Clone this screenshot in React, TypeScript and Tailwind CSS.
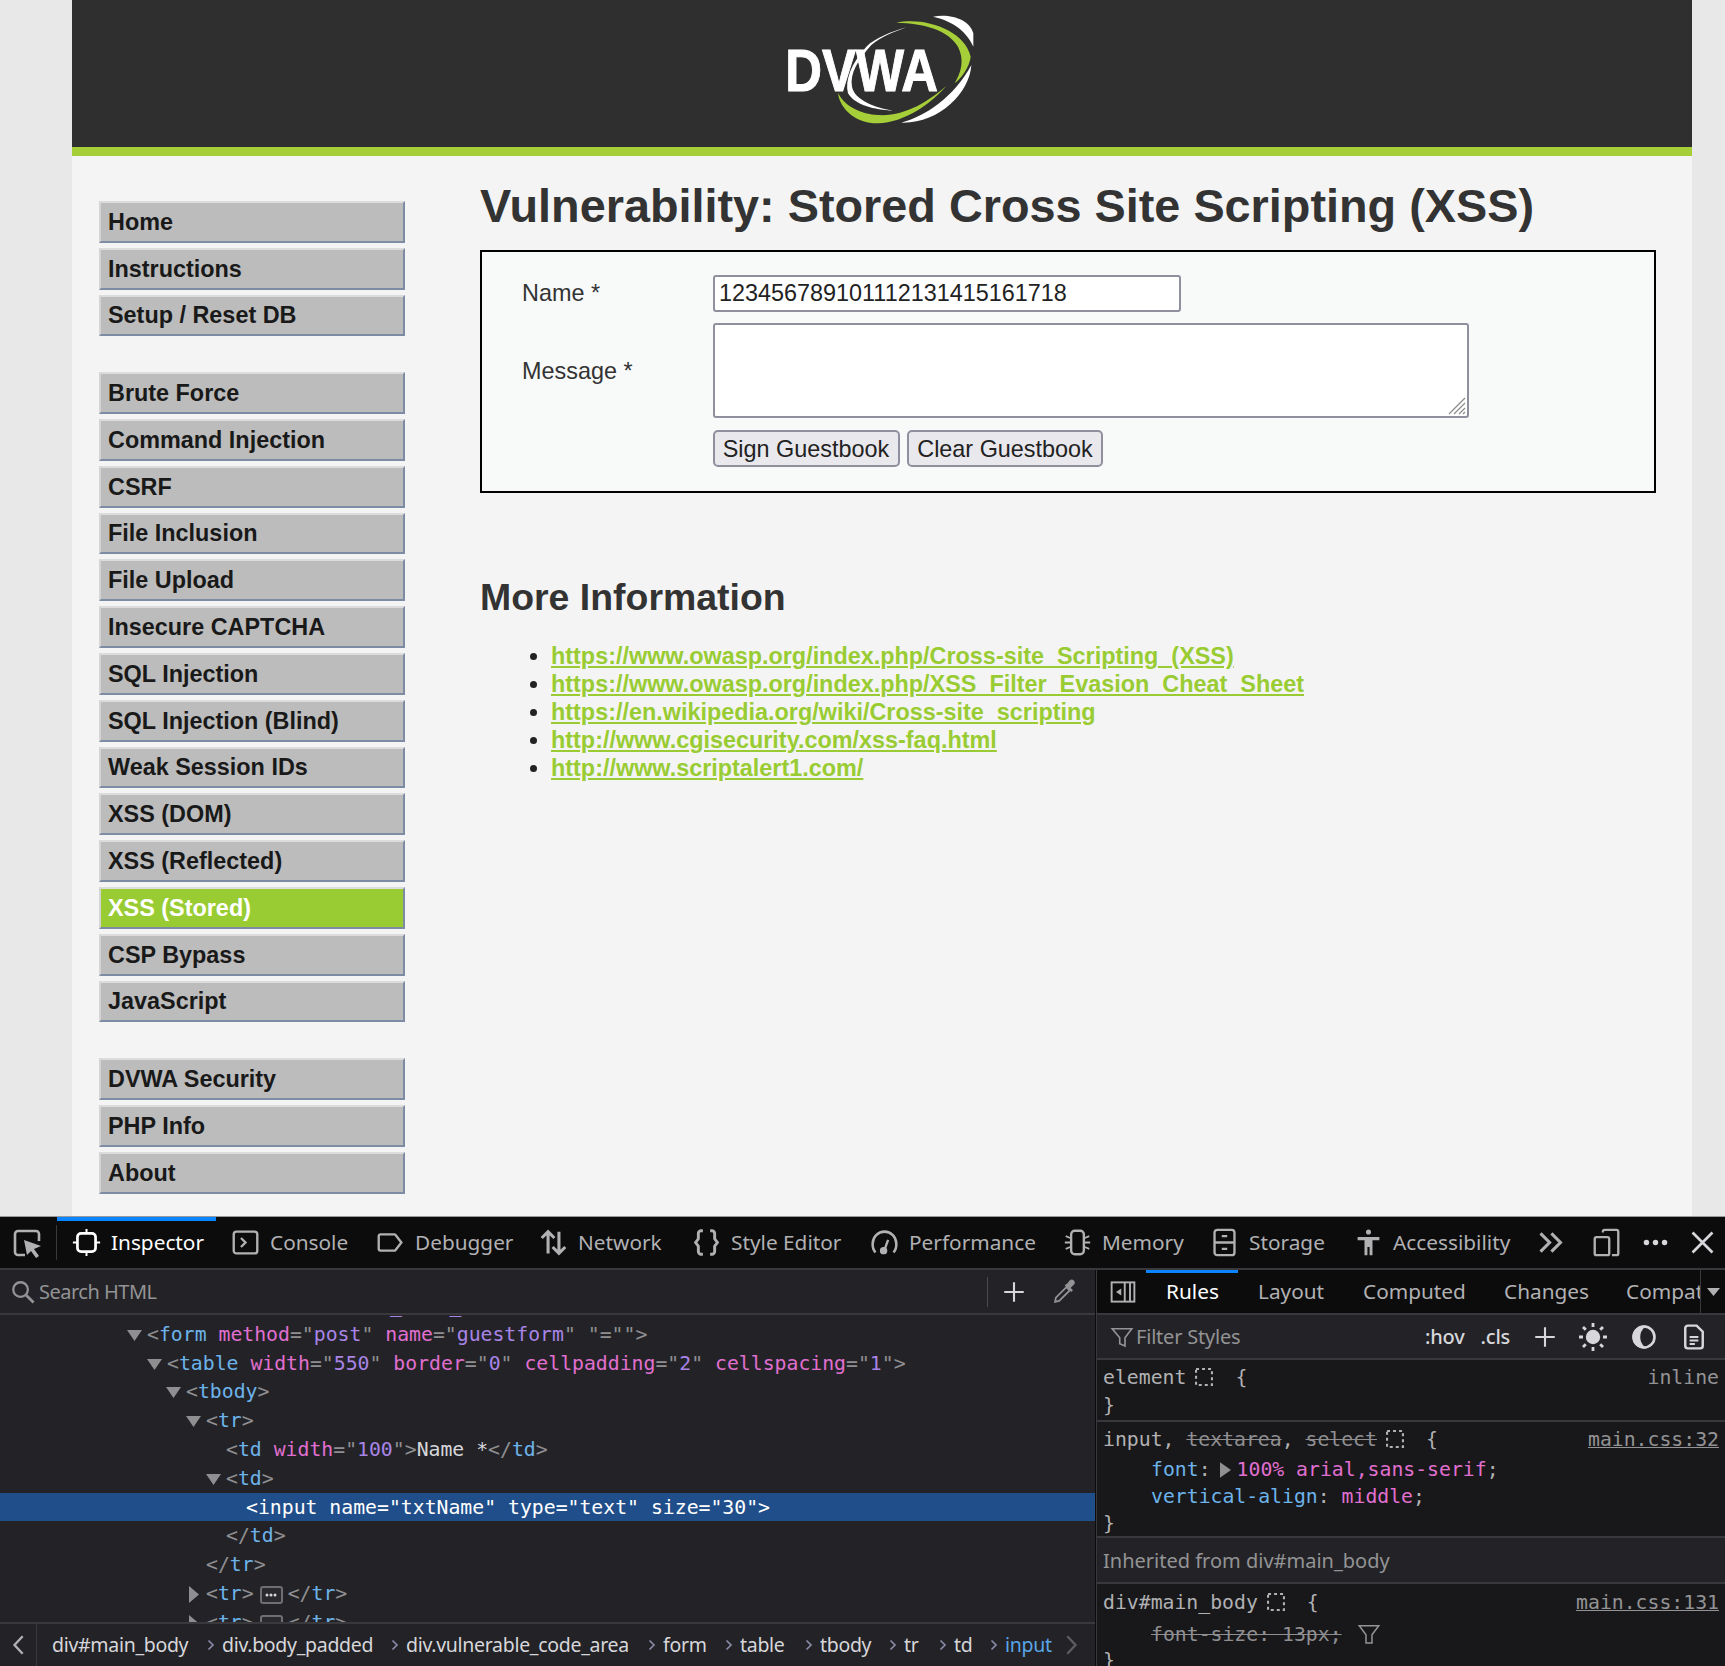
import type { ReactNode } from 'react';

const navGroups = [
  ['Home', 'Instructions', 'Setup / Reset DB'],
  [
    'Brute Force',
    'Command Injection',
    'CSRF',
    'File Inclusion',
    'File Upload',
    'Insecure CAPTCHA',
    'SQL Injection',
    'SQL Injection (Blind)',
    'Weak Session IDs',
    'XSS (DOM)',
    'XSS (Reflected)',
    'XSS (Stored)',
    'CSP Bypass',
    'JavaScript',
  ],
  ['DVWA Security', 'PHP Info', 'About'],
];

const links = [
  'https://www.owasp.org/index.php/Cross-site_Scripting_(XSS)',
  'https://www.owasp.org/index.php/XSS_Filter_Evasion_Cheat_Sheet',
  'https://en.wikipedia.org/wiki/Cross-site_scripting',
  'http://www.cgisecurity.com/xss-faq.html',
  'http://www.scriptalert1.com/',
];

function Logo() {
  return (
    <svg viewBox="0 0 960 480" className="w-[320px] h-[160px] shrink-0">
      <text x="262" y="272" textLength="458" lengthAdjust="spacingAndGlyphs" fontFamily="Liberation Sans" fontWeight="700" fontSize="176" fill="#fff" stroke="#fff" strokeWidth="3">DVWA</text>
      <path d="M595 68C680 50 800 90 818 170C815 200 790 235 770 250C790 215 800 180 780 140C750 90 680 70 595 68Z" fill="#a6ce39" />
      <path d="M420 278C425 330 480 372 540 370C620 368 700 310 745 258C690 305 620 350 540 345C490 342 440 320 420 278Z" fill="#a6ce39" />
      <path d="M705 50C760 40 815 60 826 100L826 140C805 95 770 65 705 50Z" fill="#fff" />
      <path d="M820 195C815 280 720 372 610 368C680 350 770 290 820 195Z" fill="#fff" />
      <path d="M625 82C580 95 530 115 505 140C460 190 440 240 450 280C470 315 530 330 585 332C530 322 470 300 462 260C455 220 480 180 520 135C550 110 590 95 625 82Z" fill="#fff" />
    </svg>
  );
}

function Ico({ children, size = 29, className = '' }: { children: ReactNode; size?: number; className?: string }) {
  return (
    <svg viewBox="0 0 16 16" width={size} height={size} fill="none" stroke="currentColor" strokeWidth="1.1" className={`shrink-0 ${className}`}>
      {children}
    </svg>
  );
}

const toolIcons: Record<string, ReactNode> = {
  Inspector: (
    <>
      <rect x="3" y="3" width="10" height="10" rx="2" strokeWidth="1.5" />
      <path d="M8 0.5V3M8 13v2.5M0.5 8H3M13 8h2.5" />
    </>
  ),
  Console: (
    <>
      <rect x="1.5" y="2" width="13" height="12" rx="1.5" strokeWidth="1.3" />
      <path d="M5.5 5.5 8 8l-2.500 2.500" strokeWidth="1.3" />
    </>
  ),
  Debugger: <path d="M2.500 3.500h7.500a1 1 0 0 1 .8.4L14 8l-3.200 4.100a1 1 0 0 1-.8.4H2.500a1 1 0 0 1-1-1v-7a1 1 0 0 1 1-1Z" strokeWidth="1.3" />,
  Network: <path d="M5 14V2M1.500 5.500 5 2l3.500 3.500M11 2v12M7.500 10.500 11 14l3.500-3.500" strokeWidth="1.7" />,
  'Style Editor': <path d="M6 1.500H5a1.500 1.500 0 0 0-1.500 1.500v3L2 8l1.500 2v3A1.500 1.500 0 0 0 5 14.500h1M10 1.500h1A1.500 1.500 0 0 1 12.500 3v3L14 8l-1.500 2v3a1.500 1.500 0 0 1-1.500 1.500h-1" strokeWidth="1.6" />,
  Performance: (
    <>
      <path d="M3 13.500A7 7 0 0 1 1.500 8.500a6.500 6.500 0 0 1 13 0 7 7 0 0 1-1.500 5" strokeWidth="1.4" />
      <path d="M8 12 10 6.500" strokeWidth="1.300" />
      <circle cx="7.500" cy="12.500" r="1.500" fill="currentColor" />
    </>
  ),
  Memory: (
    <>
      <rect x="4.500" y="1.500" width="7" height="13" rx="2" strokeWidth="1.300" />
      <path d="M1.500 4.500 4 5.500M1 8h3M1.500 11.500 4 10.500M14.500 4.500 12 5.500M15 8h-3M14.500 11.500 12 10.500" strokeWidth="1" />
    </>
  ),
  Storage: (
    <>
      <rect x="2.500" y="1" width="11" height="14" rx="1.500" strokeWidth="1.300" />
      <path d="M2.500 8h11M6.500 4.500h3M6.500 11.500h3" strokeWidth="1.300" />
    </>
  ),
  Accessibility: (
    <>
      <circle cx="8" cy="2.200" r="1.400" fill="currentColor" stroke="none" />
      <path d="M2 5h12v1.700H10.200V15H8.600V10.500H7.400V15H5.800V6.700H2Z" fill="currentColor" stroke="none" />
    </>
  ),
};

const tools = [
  { name: 'Inspector', w: 'w-[159px]' },
  { name: 'Console', w: 'w-[145px]' },
  { name: 'Debugger', w: 'w-[163px]' },
  { name: 'Network', w: 'w-[153px]' },
  { name: 'Style Editor', w: 'w-[178px]' },
  { name: 'Performance', w: 'w-[193px]' },
  { name: 'Memory', w: 'w-[147px]' },
  { name: 'Storage', w: 'w-[144px]' },
  { name: 'Accessibility', w: 'w-[172px]' },
];

// markup colours of the inspector
function Tag({ children }: { children: ReactNode }) {
  return <span className="text-[#6db3ea]">{children}</span>;
}
function Attr({ n, v }: { n: string; v: string }) {
  return (
    <>
      {' '}
      <span className="text-[#e06fd0]">{n}</span>=&quot;<span className="text-[#a884e6]">{v}</span>&quot;
    </>
  );
}
function Open({ open = true }: { open?: boolean }) {
  return open ? (
    <svg viewBox="0 0 10 10" className="absolute -left-[20px] top-[9px] w-[15px] h-[11px] text-[#8f8f92]" preserveAspectRatio="none">
      <path d="M0 0h10L5 10Z" fill="currentColor" />
    </svg>
  ) : (
    <svg viewBox="0 0 10 10" className="absolute -left-[17px] top-[6px] w-[10px] h-[17px] text-[#8f8f92]" preserveAspectRatio="none">
      <path d="M0 0l10 5L0 10Z" fill="currentColor" />
    </svg>
  );
}
function Badge() {
  return (
    <span className="inline-flex items-center justify-center w-[23px] h-[18px] ml-[6px] mr-[5px] rounded-[3px] border-2 border-[#6f6f73] bg-[#2a2a2e] align-[3px] text-[#d7d7db]">
      <svg viewBox="0 0 12 4" className="w-[12px] h-[4px]">
        <circle cx="2" cy="2" r="1.500" fill="currentColor" />
        <circle cx="6" cy="2" r="1.500" fill="currentColor" />
        <circle cx="10" cy="2" r="1.500" fill="currentColor" />
      </svg>
    </span>
  );
}

function SelIcon() {
  return (
    <svg viewBox="0 0 12 12" className="inline-block w-[18px] h-[18px] ml-[9px] mr-[22px] align-[-2px] text-[#b1b1b3]">
      <path d="M0.700 0.700h10.600v10.600H0.700Z" stroke="currentColor" strokeWidth="1.400" strokeDasharray="2 2" fill="none" />
    </svg>
  );
}

function Row({ indent, active, children, open }: { indent: string; active?: boolean; children: ReactNode; open?: boolean }) {
  return (
    <div className={`h-[28.8px] leading-[28.8px] whitespace-nowrap ${active ? 'bg-[#204e8a] text-white' : ''}`}>
      <div className={`relative top-[1px] ${indent}`}>
        {open !== undefined && <Open open={open} />}
        {children}
      </div>
    </div>
  );
}

function Crumb({ w, children, last }: { w: string; children: ReactNode; last?: boolean }) {
  return (
    <div className={`${w} shrink-0 flex items-center justify-between pr-[7px]`}>
      <span className="whitespace-nowrap">{children}</span>
      {!last && (
        <svg viewBox="0 0 8 12" className="w-[8px] h-[12px] text-[#8a8aa8] shrink-0">
          <path d="M1.500 1.500 6 6l-4.500 4.500" stroke="currentColor" strokeWidth="1.700" fill="none" />
        </svg>
      )}
    </div>
  );
}

function RuleRow({ children, className = '' }: { children: ReactNode; className?: string }) {
  return <div className={`h-[28px] leading-[28px] whitespace-nowrap flex justify-between pl-[6px] pr-[6px] ${className}`}>{children}</div>;
}

export default function App() {
  return (
    <div className="h-[1666px] w-[1725px] overflow-hidden flex flex-col bg-[#e8e8e8]">
      {/* the page */}
      <div className="h-[1216px] shrink-0 overflow-hidden pl-[72px] pr-[33px]">
        <div className="w-[1620px] h-full bg-[#f4f4f4] font-['Liberation_Sans',Arial,sans-serif] text-[23.4px] text-[#333]">
          <div className="h-[156px] bg-[#2f2f2f] border-b-[9px] border-b-[#a6ce39] flex justify-center">
            <div className="ml-[-49px]">
              <Logo />
            </div>
          </div>
          <div className="flex">
            <div className="w-[306px] ml-[27px] mt-[45px] shrink-0 flex flex-col gap-[35.8px]">
              {navGroups.map((group, i) => (
                <div key={i} className="flex flex-col gap-[5px]">
                  {group.map((item) => (
                    <div
                      key={item}
                      className={`h-[41.8px] pl-[7px] pt-[1px] flex items-center font-bold border-2 border-t-[#dcdcdc] border-l-[#d4d4d4] border-r-[#7d8ba3] border-b-[#7d8ba3] ${
                        item === 'XSS (Stored)' ? 'bg-[#99cc33] text-white' : 'bg-[#bcbcbc] text-[#191919]'
                      }`}
                    >
                      {item}
                    </div>
                  ))}
                </div>
              ))}
            </div>
            <div className="ml-[75px] w-[1176px]">
              <h1 className="mt-[20px] h-[60px] leading-[60px] text-[46.8px] font-bold whitespace-nowrap">Vulnerability: Stored Cross Site Scripting (XSS)</h1>
              <div className="mt-[14px] w-[1176px] h-[243px] border-2 border-black bg-[#f8f9f9] pt-[23px] pl-[40px]">
                <div className="flex items-center h-[37px]">
                  <div className="w-[191px] pt-[1px]">Name *</div>
                  <input
                    readOnly
                    defaultValue="123456789101112131415161718"
                    className="w-[468px] h-[37px] px-[4px] border-2 border-[#8f8f9d] rounded-[3px] bg-white text-[#222] outline-none"
                  />
                </div>
                <div className="flex items-center mt-[11px] h-[95px]">
                  <div className="w-[191px] pt-[2px]">Message *</div>
                  <div className="relative w-[756px] h-[95px]">
                    <textarea readOnly className="block w-full h-full resize-none border-2 border-[#8f8f9d] rounded-[3px] bg-white outline-none" />
                    <svg viewBox="0 0 18 18" className="absolute right-[3px] bottom-[3px] w-[18px] h-[18px] text-[#8a8a8a]">
                      <path d="M1 17 17 1M6 17 17 6M11 17l6-6M15 17l2-2" stroke="currentColor" strokeWidth="1.200" fill="none" />
                    </svg>
                  </div>
                </div>
                <div className="flex gap-[7px] mt-[12px] ml-[191px]">
                  <button className="w-[187px] h-[37px] pr-[1px] border-2 border-[#8f8f9d] rounded-[5px] bg-[#e9e9ed] text-[#222]">Sign Guestbook</button>
                  <button className="w-[196px] h-[37px] border-2 border-[#8f8f9d] rounded-[5px] bg-[#e9e9ed] text-[#222]">Clear Guestbook</button>
                </div>
              </div>
              <h2 className="mt-[82px] h-[44px] leading-[44px] text-[37.44px] font-bold">More Information</h2>
              <ul className="mt-[23px] pl-[71px] list-disc leading-[28px] marker:text-[#222]">
                {links.map((l) => (
                  <li key={l}>
                    <a className="font-bold underline text-[#99cc33]">{l}</a>
                  </li>
                ))}
              </ul>
            </div>
          </div>
        </div>
      </div>

      {/* devtools */}
      <div className="h-[450px] shrink-0 flex flex-col border-t border-t-[#9a9a9a] bg-[#232327] text-[#b1b1b3] font-['Noto_Sans','Open_Sans',sans-serif] text-[20px]">
        <div className="h-[51px] shrink-0 bg-[#0c0c0d] flex items-center text-[20.8px]">
          <div className="w-[53px] mr-[4px] h-full flex items-center justify-center shrink-0">
            <Ico size={32}>
              <path d="M7 14H3.500A1.500 1.500 0 0 1 2 12.500v-9A1.500 1.500 0 0 1 3.500 2h9A1.500 1.500 0 0 1 14 3.500V7" strokeWidth="1.300" />
              <path d="M6.500 6.500 15 9.500l-3.500 1.500 2.500 3.500-1.500 1-2.500-3.500-2 2Z" fill="currentColor" stroke="none" />
            </Ico>
          </div>
          <div className="w-px h-[35px] bg-[#38383d] -ml-px" />
          {tools.map((t) => (
            <div
              key={t.name}
              className={`${t.w} h-full shrink-0 flex items-center gap-[10px] pl-[15px] whitespace-nowrap ${
                t.name === 'Inspector' ? 'border-t-[4px] border-t-[#0a84ff] pb-[4px] text-white' : ''
              }`}
            >
              <Ico>{toolIcons[t.name]}</Ico>
              <span>{t.name}</span>
            </div>
          ))}
          <svg viewBox="0 0 16 16" className="w-[29px] h-[29px] ml-[25px] shrink-0" fill="none" stroke="currentColor" strokeWidth="1.700">
            <path d="M2.500 3 7.500 8l-5 5M8.500 3l5 5-5 5" />
          </svg>
          <Ico className="ml-[27px]">
            <path d="M6 2.500V2a1 1 0 0 1 1-1h6.500a1 1 0 0 1 1 1v12a1 1 0 0 1-1 1H11" strokeWidth="1.300" />
            <rect x="1.500" y="5" width="8" height="10" rx="1" strokeWidth="1.300" />
          </Ico>
          <svg viewBox="0 0 16 16" className="w-[29px] h-[29px] ml-[20px] shrink-0 text-[#d7d7db]" fill="currentColor">
            <circle cx="3" cy="8" r="1.500" />
            <circle cx="8" cy="8" r="1.500" />
            <circle cx="13" cy="8" r="1.500" />
          </svg>
          <Ico className="ml-[18px] text-[#d7d7db]">
            <path d="M2.500 2.500l11 11M13.500 2.500l-11 11" strokeWidth="1.500" />
          </Ico>
        </div>

        <div className="flex-1 min-h-0 flex border-t-2 border-t-[#38383d]">
          {/* markup */}
          <div className="w-[1096px] shrink-0 flex flex-col min-h-0 border-r border-r-[#0c0c0d]">
            <div className="h-[45px] shrink-0 flex items-center border-b-2 border-b-[#38383d] text-[#939395]">
              <Ico size={26} className="ml-[10px]">
                <circle cx="6.500" cy="6.500" r="4.500" strokeWidth="1.400" />
                <path d="M10 10l4.500 4.500" strokeWidth="1.700" />
              </Ico>
              <span className="ml-[3px] w-[948px] tracking-[-0.5px]">Search HTML</span>
              <div className="w-px h-[30px] bg-[#4a4a4f]" />
              <Ico size={26} className="ml-[13px] text-[#d7d7db]">
                <path d="M8 2v12M2 8h12" strokeWidth="1.300" />
              </Ico>
              <Ico size={26} className="ml-[24px]">
                <path d="M9.500 5 3 11.500 2.500 14l2.500-.5L11.500 7Z" />
                <path d="M9 3.500 13 7.500M11 5.500l2.500-2.500a1 1 0 0 0-1.500-1.500L10 4" fill="currentColor" strokeWidth="1.500" />
              </Ico>
            </div>
            <div className="h-[307px] shrink-0 overflow-hidden font-['DejaVu_Sans_Mono',monospace] text-[19.8px] text-[#8f8f92]">
              <div className="-mt-[24px]">
                <Row indent="pl-[128px]">
                  &lt;<Tag>div</Tag>
                  <Attr n="class" v="vulnerable_code_area" />
                  &gt;
                </Row>
                <Row indent="ml-[147px]" open>
                  &lt;<Tag>form</Tag>
                  <Attr n="method" v="post" />
                  <Attr n="name" v="guestform" />
                  {' "="">'}
                </Row>
                <Row indent="ml-[167px]" open>
                  &lt;<Tag>table</Tag>
                  <Attr n="width" v="550" />
                  <Attr n="border" v="0" />
                  <Attr n="cellpadding" v="2" />
                  <Attr n="cellspacing" v="1" />
                  &gt;
                </Row>
                <Row indent="ml-[186px]" open>
                  &lt;<Tag>tbody</Tag>&gt;
                </Row>
                <Row indent="ml-[206px]" open>
                  &lt;<Tag>tr</Tag>&gt;
                </Row>
                <Row indent="ml-[226px]">
                  &lt;<Tag>td</Tag>
                  <Attr n="width" v="100" />
                  &gt;<span className="text-[#d7d7db]">Name *</span>&lt;/<Tag>td</Tag>&gt;
                </Row>
                <Row indent="ml-[226px]" open>
                  &lt;<Tag>td</Tag>&gt;
                </Row>
                <Row indent="ml-[246px]" active>
                  {'<input name="txtName" type="text" size="30">'}
                </Row>
                <Row indent="ml-[226px]">
                  &lt;/<Tag>td</Tag>&gt;
                </Row>
                <Row indent="ml-[206px]">
                  &lt;/<Tag>tr</Tag>&gt;
                </Row>
                <Row indent="ml-[206px]" open={false}>
                  &lt;<Tag>tr</Tag>&gt;
                  <Badge />
                  &lt;/<Tag>tr</Tag>&gt;
                </Row>
                <Row indent="ml-[206px]" open={false}>
                  &lt;<Tag>tr</Tag>&gt;
                  <Badge />
                  &lt;/<Tag>tr</Tag>&gt;
                </Row>
              </div>
            </div>
            <div className="flex-1 min-h-0 flex items-center border-t-2 border-t-[#38383d] text-[19.5px] tracking-[-0.3px] text-[#d7d7db]">
              <div className="w-[37px] h-full shrink-0 flex items-center justify-center border-r border-r-[#38383d]">
                <svg viewBox="0 0 12 18" className="w-[14px] h-[22px] text-[#b1b1b3]">
                  <path d="M10 1.500 3 9l7 7.500" stroke="currentColor" strokeWidth="2" fill="none" />
                </svg>
              </div>
              <div className="ml-[15px] flex items-center">
                <Crumb w="w-[170px]">div#main_body</Crumb>
                <Crumb w="w-[184px]">div.body_padded</Crumb>
                <Crumb w="w-[257px]">div.vulnerable_code_area</Crumb>
                <Crumb w="w-[77px]">form</Crumb>
                <Crumb w="w-[80px]">table</Crumb>
                <Crumb w="w-[84px]">tbody</Crumb>
                <Crumb w="w-[50px]">tr</Crumb>
                <Crumb w="w-[51px]">td</Crumb>
                <Crumb w="w-[54px]" last>
                  <span className="text-[#5aa4e6]">input</span>
                </Crumb>
                <svg viewBox="0 0 12 18" className="w-[14px] h-[22px] text-[#5c5c61] ml-[6px]">
                  <path d="M2 1.500 9 9l-7 7.500" stroke="currentColor" strokeWidth="2" fill="none" />
                </svg>
              </div>
            </div>
          </div>

          {/* rules */}
          <div className="flex-1 min-w-0 flex flex-col border-l border-l-[#38383d]">
            <div className="h-[45px] shrink-0 bg-[#0c0c0d] border-b-2 border-b-[#38383d] flex items-center relative text-[20.8px]">
              <Ico size={28} className="ml-[12px]">
                <rect x="1.500" y="2.500" width="13" height="11" />
                <path d="M9 2.500v11M12 2.500v11" />
                <path d="M7 6v4L4 8Z" fill="currentColor" stroke="none" />
              </Ico>
              <div className="absolute left-[49px] top-0 w-[92px] h-[3px] bg-[#0a84ff]" />
              <span className="ml-[29px] w-[92px] text-white">Rules</span>
              <span className="w-[105px]">Layout</span>
              <span className="w-[141px]">Computed</span>
              <span className="w-[122px]">Changes</span>
              <span className="w-[74px] overflow-hidden whitespace-nowrap">Compat</span>
              <div className="w-px h-full bg-[#38383d]" />
              <svg viewBox="0 0 10 6" className="w-[13px] h-[8px] ml-[6px] text-[#b1b1b3]">
                <path d="M0 0h10L5 6Z" fill="currentColor" />
              </svg>
            </div>
            <div className="h-[45px] shrink-0 flex items-center border-b-2 border-b-[#38383d] tracking-[-0.2px]">
              <Ico size={24} className="ml-[13px] text-[#939395]">
                <path d="M1.500 2.500h13L10 8.500V14l-3.500-1.500V8.500Z" />
              </Ico>
              <span className="ml-[2px] w-[286px] text-[#939395]">Filter Styles</span>
              <span className="ml-[3px] font-medium text-[#d7d7db]">:hov</span>
              <span className="ml-[16px] font-medium text-[#d7d7db]">.cls</span>
              <Ico size={26} className="ml-[22px] text-[#d7d7db]">
                <path d="M8 2v12M2 8h12" strokeWidth="1.300" />
              </Ico>
              <Ico size={32} className="ml-[19px] text-[#d7d7db]">
                <circle cx="8" cy="8" r="3.600" fill="currentColor" stroke="none" />
                <path d="M8 1v2M8 13v2M1 8h2M13 8h2M3 3l1.400 1.400M11.600 11.600 13 13M3 13l1.400-1.400M11.600 4.400 13 3" strokeWidth="1.400" />
              </Ico>
              <Ico size={28} className="ml-[21px] text-[#d7d7db]">
                <circle cx="8" cy="8" r="6" strokeWidth="1.500" />
                <path d="M8 2a6 6 0 0 0 0 12 8 8 0 0 1 0-12Z" fill="currentColor" />
              </Ico>
              <Ico size={28} className="ml-[22px] text-[#d7d7db]">
                <path d="M3 3a1.500 1.500 0 0 1 1.500-1.500H9.500L13 5v8a1.500 1.500 0 0 1-1.500 1.500h-7A1.500 1.500 0 0 1 3 13Z" strokeWidth="1.400" />
                <path d="M5.500 8h5M5.500 10h5M5.500 12h3" />
              </Ico>
            </div>
            <div className="flex-1 min-h-0 overflow-hidden bg-[#18181a] font-['DejaVu_Sans_Mono',monospace] text-[19.8px] text-[#b1b1b3]">
              <div className="pt-[4px] h-[62px] border-b-2 border-b-[#38383d]">
                <RuleRow>
                  <span>
                    element
                    <SelIcon />
                    {'{'}
                  </span>
                  <span className="text-[#939395]">inline</span>
                </RuleRow>
                <RuleRow>{'}'}</RuleRow>
              </div>
              <div className="pt-[4px] h-[116px] border-b-2 border-b-[#38383d]">
                <RuleRow>
                  <span>
                    input, <span className="line-through text-[#8f8f92]">textarea</span>, <span className="line-through text-[#8f8f92]">select</span>
                    <SelIcon />
                    {'{'}
                  </span>
                  <span className="underline text-[#939395]">main.css:32</span>
                </RuleRow>
                <RuleRow className="mt-[2px]">
                  <span className="pl-[48px]">
                    <span className="text-[#6db3ea]">font</span>:
                    <svg viewBox="0 0 10 14" className="inline-block w-[11px] h-[16px] ml-[9px] mr-[6px] align-[-2px] text-[#8f8f92]">
                      <path d="M0 0l10 7L0 14Z" fill="currentColor" />
                    </svg>
                    <span className="text-[#e06fd0]">100% arial,sans-serif</span>;
                  </span>
                </RuleRow>
                <RuleRow className="-mt-[1px]">
                  <span className="pl-[48px]">
                    <span className="text-[#6db3ea]">vertical-align</span>: <span className="text-[#e06fd0]">middle</span>;
                  </span>
                </RuleRow>
                <RuleRow className="-mt-[1px]">{'}'}</RuleRow>
              </div>
              <div className="h-[46px] pt-[2px] bg-[#232327] border-b-2 border-b-[#38383d] flex items-center pl-[6px] font-['Noto_Sans','Open_Sans',sans-serif] text-[20px] text-[#939395]">
                Inherited from div#main_body
              </div>
              <div className="pt-[5px]">
                <RuleRow>
                  <span>
                    div#main_body
                    <SelIcon />
                    {'{'}
                  </span>
                  <span className="underline text-[#939395]">main.css:131</span>
                </RuleRow>
                <RuleRow className="mt-[4px]">
                  <span className="pl-[48px]">
                    <span className="line-through text-[#8f8f92]">font-size: 13px;</span>
                    <svg viewBox="0 0 16 16" className="inline-block w-[24px] h-[24px] ml-[15px] align-[-5px] text-[#939395]" fill="none" stroke="currentColor">
                      <path d="M1.500 2.500h13L10 8.500V14H6V8.500Z" />
                    </svg>
                  </span>
                </RuleRow>
                <RuleRow className="-mt-[2px]">{'}'}</RuleRow>
              </div>
            </div>
          </div>
        </div>
      </div>
    </div>
  );
}
